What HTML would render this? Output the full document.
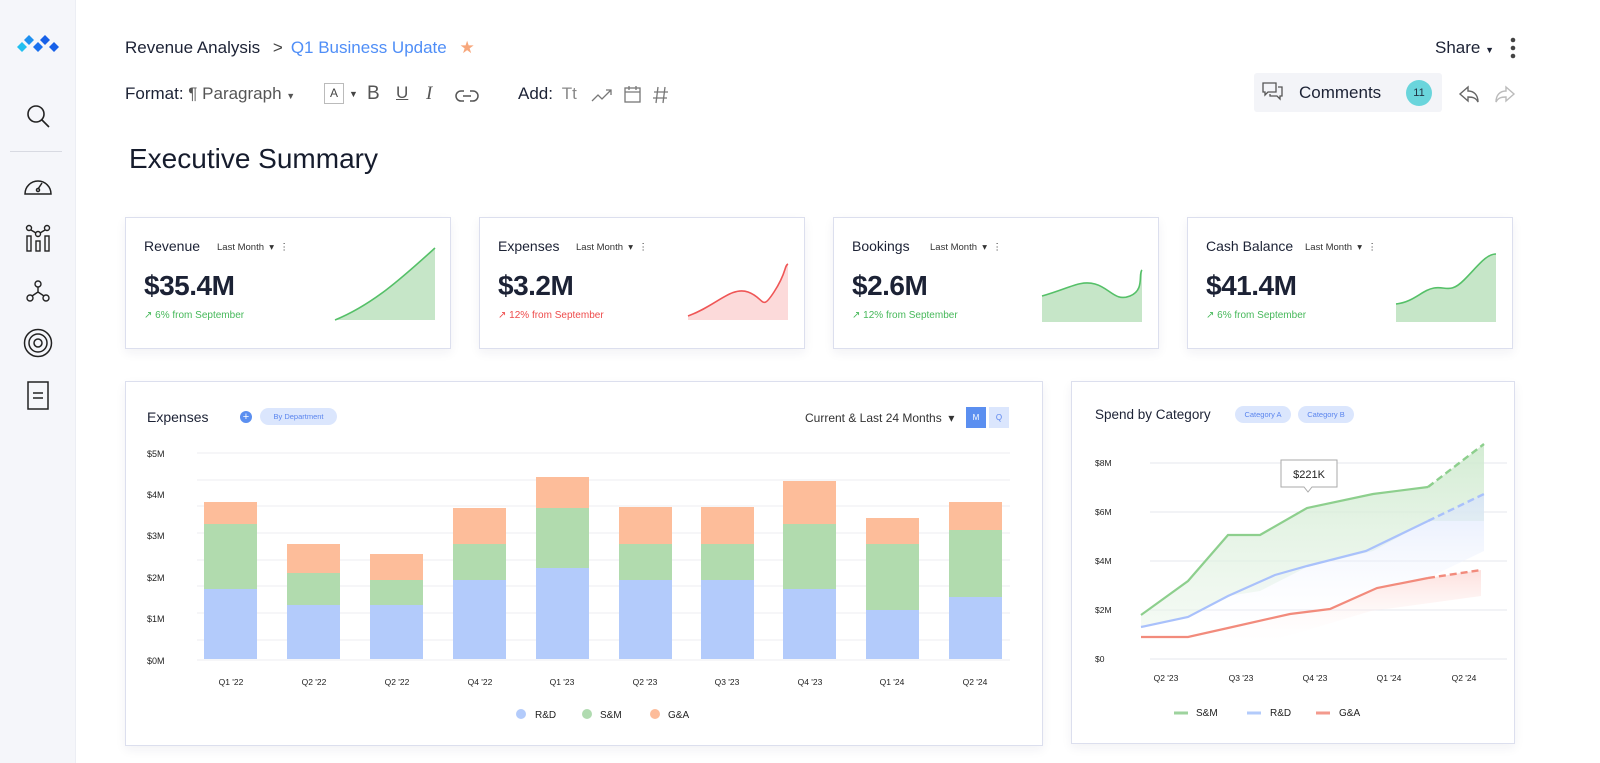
<!DOCTYPE html>
<html><head><meta charset="utf-8"><style>
*{box-sizing:border-box;margin:0;padding:0}
body{width:1600px;height:763px;overflow:hidden;background:#fff;font-family:"Liberation Sans",sans-serif;color:#1c2235;position:relative}
.a{position:absolute}
.side{left:0;top:0;width:76px;height:763px;background:#f5f6fa;border-right:1px solid #eceef4}
.card{position:absolute;border:1.5px solid #dcdfee;background:#fff;box-shadow:0 4px 10px rgba(30,40,90,.06)}
.kt{font-size:14px;color:#1c2235}
.lm{font-size:9.5px;color:#333}
.big{font-size:28px;font-weight:bold;letter-spacing:-0.5px}
.ch{font-size:10px}
.pill{position:absolute;background:#dbe6fd;color:#5b85ee;font-size:7.5px;border-radius:9px;text-align:center;line-height:17px;height:17px}
.tick{font-size:9px;fill:#222}
</style></head><body>
<div class="a side">
<svg class="a" style="left:16px;top:34px" width="44" height="22">
<path d="M13 1l5 5-5 5-5-5z" fill="#1e90f0"/><path d="M29 1l5 5-5 5-5-5z" fill="#1760e8"/>
<path d="M6 8l5 5-5 5-5-5z" fill="#22c0f0"/><path d="M22 8l5 5-5 5-5-5z" fill="#1a70ee"/><path d="M38 8l5 5-5 5-5-5z" fill="#1760e8"/>
</svg>
<svg class="a" style="left:26px;top:104px" width="26" height="26" fill="none" stroke="#222" stroke-width="1.6"><circle cx="10" cy="10" r="8"/><path d="M16 16l7 7"/></svg>
<div class="a" style="left:10px;top:151px;width:52px;border-top:1px solid #d8dae2"></div>
<svg class="a" style="left:23px;top:174px" width="30" height="24" fill="none" stroke="#222" stroke-width="1.5"><path d="M2 20a13 13 0 1 1 26 0z"/><path d="M15 15l4-6"/><circle cx="15" cy="16" r="1.5"/></svg>
<svg class="a" style="left:25px;top:224px" width="26" height="30" fill="none" stroke="#222" stroke-width="1.4"><circle cx="4" cy="4" r="2.5"/><circle cx="13" cy="10" r="2.5"/><circle cx="22" cy="4" r="2.5"/><path d="M6 6l5 3M15 9l5-3"/><rect x="2" y="12" width="4" height="15"/><rect x="11" y="17" width="4" height="10"/><rect x="20" y="12" width="4" height="15"/></svg>
<svg class="a" style="left:25px;top:280px" width="26" height="24" fill="none" stroke="#222" stroke-width="1.4"><circle cx="13" cy="4" r="3"/><circle cx="5" cy="18" r="3"/><circle cx="21" cy="18" r="3"/><path d="M13 7v5M13 12l-6 4M13 12l6 4"/></svg>
<svg class="a" style="left:23px;top:328px" width="30" height="30" fill="none" stroke="#222" stroke-width="1.5"><circle cx="15" cy="15" r="13.5"/><circle cx="15" cy="15" r="9"/><circle cx="15" cy="15" r="4"/></svg>
<svg class="a" style="left:27px;top:381px" width="22" height="30" fill="none" stroke="#222" stroke-width="1.5"><rect x="1" y="1" width="20" height="27"/><path d="M6 12h10M6 17h10"/></svg>
</div>

<div class="a" style="left:125px;top:38px;font-size:17px">Revenue Analysis <span style="margin:0 8px;color:#444">&gt;</span><span style="color:#4f8ef7">Q1 Business Update</span> <span style="color:#f7a77c;margin-left:8px">★</span></div>
<div class="a" style="left:1435px;top:38px;font-size:17px">Share <span style="font-size:9px">▼</span></div>
<svg class="a" style="left:1508px;top:36px" width="10" height="24" fill="#444"><circle cx="5" cy="4" r="2.3"/><circle cx="5" cy="12" r="2.3"/><circle cx="5" cy="20" r="2.3"/></svg>

<div class="a" style="left:125px;top:84px;font-size:17px">Format: <span style="color:#555">¶ Paragraph <span style="font-size:9px">▼</span></span></div>
<div class="a" style="left:324px;top:83px;width:20px;height:21px;border:1px solid #bbb;font-size:12px;text-align:center;line-height:19px;color:#444">A</div>
<div class="a" style="left:349px;top:89px;font-size:9px;color:#444">▼</div>
<div class="a" style="left:367px;top:83px;font-size:19px;color:#555">B</div>
<div class="a" style="left:396px;top:83px;font-size:17px;color:#555;text-decoration:underline">U</div>
<div class="a" style="left:426px;top:83px;font-size:19px;color:#555;font-family:'Liberation Serif',serif;font-style:italic">I</div>
<svg class="a" style="left:455px;top:88px" width="24" height="16" fill="none" stroke="#555" stroke-width="1.5"><path d="M9 3H6a5 5 0 0 0 0 10h3M15 3h3a5 5 0 0 1 0 10h-3M8 8h8"/></svg>
<div class="a" style="left:518px;top:84px;font-size:17px">Add: <span style="color:#888;margin-left:4px">Tt</span></div>
<svg class="a" style="left:591px;top:86px" width="90" height="18" fill="none" stroke="#777" stroke-width="1.3"><path d="M1 15l6-6 4 4 9-9M15 4h5v5"/><rect x="34" y="2" width="15" height="14"/><path d="M34 6h15M38 0v4M45 0v4"/><path d="M67 1l-2 16M74 1l-2 16M63 6h14M62 12h14"/></svg>

<div class="a" style="left:1254px;top:73px;width:188px;height:39px;background:#f3f4f8;border-radius:3px"></div>
<svg class="a" style="left:1262px;top:82px" width="22" height="20" fill="none" stroke="#555" stroke-width="1.3"><path d="M1 1h13v9H6l-3 3v-3H1z"/><path d="M16 5h4v9h-2v3l-3-3H8v-2"/></svg>
<div class="a" style="left:1299px;top:83px;font-size:17px">Comments</div>
<div class="a" style="left:1406px;top:80px;width:26px;height:26px;border-radius:50%;background:#6ad5dc;font-size:11px;text-align:center;line-height:26px;color:#234">11</div>
<svg class="a" style="left:1458px;top:84px" width="60" height="22" fill="none" stroke-width="1.4"><path stroke="#666" d="M10 3L2 10l8 7v-4c5 0 8 1 10 5 0-7-4-11-10-11z"/><path stroke="#bbb" d="M48 3l8 7-8 7v-4c-5 0-8 1-10 5 0-7 4-11 10-11z"/></svg>

<div class="a" style="left:129px;top:143px;font-size:28px;font-weight:500;color:#161c2d">Executive Summary</div>

<div class="card" style="left:125px;top:217px;width:326px;height:132px">
<div class="a kt" style="left:18px;top:20px">Revenue</div><div class="a lm" style="left:91px;top:24px">Last Month &nbsp;▾ &nbsp;⋮</div>
<div class="a big" style="left:18px;top:52px">$35.4M</div><div class="a ch" style="left:18px;top:92px;color:#46b85a">↗ 6% from September</div>
<svg class="a" style="left:208px;top:28px" width="104" height="76"><path d="M1 74C40 58 70 30 101 2V74Z" fill="#c6e6c8"/><path d="M1 74C40 58 70 30 101 2" fill="none" stroke="#55c068" stroke-width="1.6"/></svg></div>
<div class="card" style="left:479px;top:217px;width:326px;height:132px">
<div class="a kt" style="left:18px;top:20px">Expenses</div><div class="a lm" style="left:96px;top:24px">Last Month &nbsp;▾ &nbsp;⋮</div>
<div class="a big" style="left:18px;top:52px">$3.2M</div><div class="a ch" style="left:18px;top:92px;color:#ee4b4b">↗ 12% from September</div>
<svg class="a" style="left:206px;top:44px" width="104" height="60"><path d="M2 54C30 44 45 24 62 30S75 50 88 30 98 4 102 2V58H2Z" fill="#fcdada"/><path d="M2 54C30 44 45 24 62 30S75 50 88 30 98 4 102 2" fill="none" stroke="#ef5656" stroke-width="1.6"/></svg></div>
<div class="card" style="left:833px;top:217px;width:326px;height:132px">
<div class="a kt" style="left:18px;top:20px">Bookings</div><div class="a lm" style="left:96px;top:24px">Last Month &nbsp;▾ &nbsp;⋮</div>
<div class="a big" style="left:18px;top:52px">$2.6M</div><div class="a ch" style="left:18px;top:92px;color:#46b85a">↗ 12% from September</div>
<svg class="a" style="left:206px;top:48px" width="104" height="56"><path d="M2 30C30 22 40 14 55 18S75 36 90 30 98 8 102 4V56H2Z" fill="#c6e6c8"/><path d="M2 30C30 22 40 14 55 18S75 36 90 30 98 8 102 4" fill="none" stroke="#55c068" stroke-width="1.6"/></svg></div>
<div class="card" style="left:1187px;top:217px;width:326px;height:132px">
<div class="a kt" style="left:18px;top:20px">Cash Balance</div><div class="a lm" style="left:117px;top:24px">Last Month &nbsp;▾ &nbsp;⋮</div>
<div class="a big" style="left:18px;top:52px">$41.4M</div><div class="a ch" style="left:18px;top:92px;color:#46b85a">↗ 6% from September</div>
<svg class="a" style="left:206px;top:32px" width="104" height="72"><path d="M2 54C20 52 28 40 40 38S56 44 70 30 92 4 102 4V72H2Z" fill="#c6e6c8"/><path d="M2 54C20 52 28 40 40 38S56 44 70 30 92 4 102 4" fill="none" stroke="#55c068" stroke-width="1.6"/></svg></div>

<div class="card" style="left:125px;top:381px;width:918px;height:365px"></div>
<div class="a" style="left:147px;top:409px;font-size:14px">Expenses</div>
<div class="a" style="left:240px;top:411px;width:12px;height:12px;border-radius:50%;background:#5b8ff0;color:#fff;font-size:11px;line-height:12px;text-align:center">+</div>
<div class="pill" style="left:260px;top:408px;width:77px">By Department</div>
<div class="a" style="left:805px;top:411px;font-size:12px;color:#333">Current &amp; Last 24 Months &nbsp;▾</div>
<div class="a" style="left:966px;top:407px;width:20px;height:21px;background:#5b8ff0;color:#fff;font-size:8px;text-align:center;line-height:21px">M</div>
<div class="a" style="left:989px;top:407px;width:20px;height:21px;background:#dbe6fd;color:#5b85ee;font-size:8px;text-align:center;line-height:21px">Q</div>
<svg class="a" style="left:125px;top:381px" width="918" height="365">
<g stroke="#ececf1" stroke-width="1">
<line x1="72" x2="885" y1="72" y2="72"/><line x1="72" x2="885" y1="99" y2="99"/><line x1="72" x2="885" y1="125" y2="125"/><line x1="72" x2="885" y1="152" y2="152"/><line x1="72" x2="885" y1="179" y2="179"/><line x1="72" x2="885" y1="205" y2="205"/><line x1="72" x2="885" y1="232" y2="232"/><line x1="72" x2="885" y1="259" y2="259"/><line x1="72" x2="885" y1="279" y2="279"/></g>
<g class="tick"><text x="22" y="76" class="tick">$5M</text><text x="22" y="117" class="tick">$4M</text><text x="22" y="158" class="tick">$3M</text><text x="22" y="200" class="tick">$2M</text><text x="22" y="241" class="tick">$1M</text><text x="22" y="283" class="tick">$0M</text></g>
<g id="bars"></g>
<g font-size="8.5" fill="#222" text-anchor="middle">
<text x="106" y="304">Q1 '22</text><text x="189" y="304">Q2 '22</text><text x="272" y="304">Q2 '22</text><text x="355" y="304">Q4 '22</text><text x="437" y="304">Q1 '23</text><text x="520" y="304">Q2 '23</text><text x="602" y="304">Q3 '23</text><text x="685" y="304">Q4 '23</text><text x="767" y="304">Q1 '24</text><text x="850" y="304">Q2 '24</text></g>
<g font-size="10" fill="#222"><circle cx="396" cy="333" r="5" fill="#b3cbfb"/><text x="410" y="337">R&amp;D</text><circle cx="462" cy="333" r="5" fill="#b0dbb0"/><text x="475" y="337">S&amp;M</text><circle cx="530" cy="333" r="5" fill="#fdbc9a"/><text x="543" y="337">G&amp;A</text></g>
</svg>

<div class="card" style="left:1071px;top:381px;width:444px;height:363px"></div>
<div class="a" style="left:1095px;top:407px;font-size:13.5px">Spend by Category</div>
<div class="pill" style="left:1235px;top:406px;width:56px">Category A</div>
<div class="pill" style="left:1298px;top:406px;width:56px">Category B</div>
<svg class="a" style="left:1071px;top:381px" width="444" height="363">
<defs>
<linearGradient id="gg" x1="0" y1="0" x2="0" y2="1"><stop offset="0" stop-color="#cfeacf" stop-opacity=".9"/><stop offset="1" stop-color="#e9f5e9" stop-opacity=".5"/></linearGradient>
<linearGradient id="gb" x1="0" y1="0" x2="0" y2="1"><stop offset="0" stop-color="#d7e2fd" stop-opacity=".9"/><stop offset="1" stop-color="#fff" stop-opacity="0"/></linearGradient>
<linearGradient id="gr" x1="0" y1="0" x2="0" y2="1"><stop offset="0" stop-color="#fcd4d0" stop-opacity=".9"/><stop offset="1" stop-color="#fff" stop-opacity="0"/></linearGradient>
</defs>
<g stroke="#e6e7ee"><line x1="79" x2="436" y1="82" y2="82"/><line x1="79" x2="436" y1="131" y2="131"/><line x1="79" x2="436" y1="180" y2="180"/><line x1="79" x2="436" y1="229" y2="229"/><line x1="79" x2="436" y1="278" y2="278"/></g>
<g font-size="8.5" fill="#222"><text x="24" y="85">$8M</text><text x="24" y="134">$6M</text><text x="24" y="183">$4M</text><text x="24" y="232">$2M</text><text x="24" y="281">$0</text></g>
<path d="M70 234L117 200L157 154L189 154L236 127L302 113L357 106L413 63V140L357 140L302 170L236 186L189 210L157 215L117 236L70 246Z" fill="url(#gg)"/>
<path d="M70 246L117 236L157 215L204 194L236 185L295 170L357 140L413 113V170L357 197L306 207L259 228L219 233L157 247L117 256L70 256Z" fill="url(#gb)" opacity=".8"/>
<path d="M70 256L117 256L157 247L219 233L259 228L306 207L357 197L410 189V215L300 230L200 260L117 265Z" fill="url(#gr)" opacity=".8"/>
<path d="M70 234L117 200L157 154L189 154L236 127L302 113L357 106" fill="none" stroke="#8dcf8d" stroke-width="2.2"/>
<path d="M357 106L413 63" fill="none" stroke="#8dcf8d" stroke-width="2.4" stroke-dasharray="7 4"/>
<path d="M70 246L117 236L157 215L204 194L236 185L295 170L357 140" fill="none" stroke="#a9c1fb" stroke-width="2.2"/>
<path d="M357 140L413 113" fill="none" stroke="#a9c1fb" stroke-width="2.4" stroke-dasharray="7 4"/>
<path d="M70 256L117 256L157 247L219 233L259 228L306 207L357 197" fill="none" stroke="#f28b7c" stroke-width="2.2"/>
<path d="M357 197L410 189" fill="none" stroke="#f28b7c" stroke-width="2.4" stroke-dasharray="7 4"/>
<path d="M210 79h56v27h-25l-4 5-4-5h-23z" fill="#fff" stroke="#aaa"/>
<text x="238" y="97" font-size="11" fill="#222" text-anchor="middle">$221K</text>
<g font-size="8.5" fill="#222" text-anchor="middle"><text x="95" y="300">Q2 '23</text><text x="170" y="300">Q3 '23</text><text x="244" y="300">Q4 '23</text><text x="318" y="300">Q1 '24</text><text x="393" y="300">Q2 '24</text></g>
<g font-size="10" fill="#222"><line x1="103" x2="117" y1="332" y2="332" stroke="#9ed39e" stroke-width="3"/><text x="125" y="335">S&amp;M</text><line x1="176" x2="190" y1="332" y2="332" stroke="#b3cbfb" stroke-width="3"/><text x="199" y="335">R&amp;D</text><line x1="245" x2="259" y1="332" y2="332" stroke="#f39a8d" stroke-width="3"/><text x="268" y="335">G&amp;A</text></g>
</svg>
<script>
var d=[[502,524,589],[544,573,605],[554,580,605],[508,544,580],[477,508,568],[507,544,580],[507,544,580],[481,524,589],[518,544,610],[502,530,597]];
var xs=[204,287,370,453,536,619,701,783,866,949],h='';
d.forEach(function(v,i){var x=xs[i]-125,g=v[0]-381,s=v[1]-381,r=v[2]-381,b=659-381;
h+='<rect x="'+x+'" y="'+g+'" width="53" height="'+(s-g)+'" fill="#fdbd9a"/><rect x="'+x+'" y="'+s+'" width="53" height="'+(r-s)+'" fill="#b1dbae"/><rect x="'+x+'" y="'+r+'" width="53" height="'+(b-r)+'" fill="#b3cbfb"/>';});
document.getElementById('bars').innerHTML=h;
</script>
</body></html>
